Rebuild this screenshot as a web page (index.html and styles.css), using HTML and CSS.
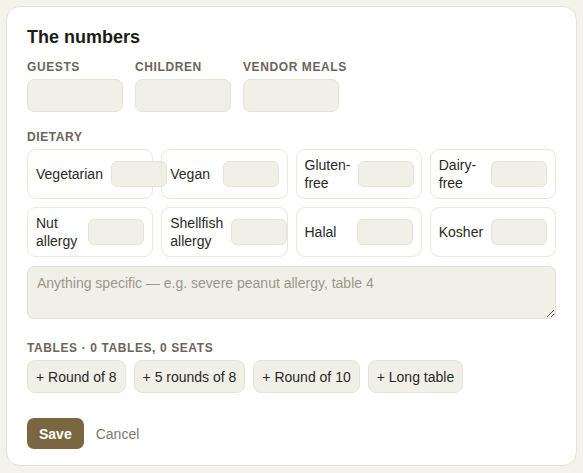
FILE: index.html
```html
<!DOCTYPE html>
<html lang="en">
<head>
    <meta charset="UTF-8">
    <meta name="viewport" content="width=device-width, initial-scale=1.0">
    <title>The numbers</title>
    <link rel="stylesheet" href="styles.css">
</head>
<body>
    <div class="card">
        <h2 class="card-title">The numbers</h2>

        <!-- head counts -->
        <div class="counts">
            <div class="field">
                <label class="field-label" for="guests">Guests</label>
                <input class="num-input" id="guests" type="number">
            </div>
            <div class="field">
                <label class="field-label" for="children">Children</label>
                <input class="num-input" id="children" type="number">
            </div>
            <div class="field">
                <label class="field-label" for="vendor">Vendor meals</label>
                <input class="num-input" id="vendor" type="number">
            </div>
        </div>

        <!-- dietary -->
        <div class="field-label dietary-label">Dietary</div>
        <div class="diet-grid">
            <label class="diet-item"><span class="diet-name">Vegetarian</span><input class="diet-input" type="number"></label>
            <label class="diet-item"><span class="diet-name">Vegan</span><input class="diet-input" type="number"></label>
            <label class="diet-item"><span class="diet-name">Gluten-free</span><input class="diet-input" type="number"></label>
            <label class="diet-item"><span class="diet-name">Dairy-free</span><input class="diet-input" type="number"></label>
            <label class="diet-item"><span class="diet-name">Nut allergy</span><input class="diet-input" type="number"></label>
            <label class="diet-item"><span class="diet-name">Shellfish allergy</span><input class="diet-input" type="number"></label>
            <label class="diet-item"><span class="diet-name">Halal</span><input class="diet-input" type="number"></label>
            <label class="diet-item"><span class="diet-name">Kosher</span><input class="diet-input" type="number"></label>
        </div>
        <textarea class="notes" placeholder="Anything specific — e.g. severe peanut allergy, table 4"></textarea>

        <!-- tables -->
        <div class="field-label tables-label">Tables · 0 tables, 0 seats</div>
        <div class="table-buttons">
            <button class="table-btn">+ Round of 8</button>
            <button class="table-btn">+ 5 rounds of 8</button>
            <button class="table-btn">+ Round of 10</button>
            <button class="table-btn">+ Long table</button>
        </div>

        <div class="actions">
            <button class="save-btn">Save</button>
            <button class="cancel-btn">Cancel</button>
        </div>
    </div>
</body>
</html>
```

FILE: styles.css
```css
body {
    font-family: "Liberation Sans", Arial, sans-serif;
    background: #f3f2eb;
    margin: 0;
    padding: 6px;
    color: #2a2926;
}
.card {
    background: #ffffff;
    border: 1px solid #e4e2d8;
    border-radius: 14px;
    padding: 20px 20px 16px;
}
.card-title {
    margin: 0 0 12px;
    font-size: 18px;
    font-weight: bold;
    color: #1c1c1a;
}
.field-label {
    display: block;
    font-size: 12px;
    font-weight: bold;
    text-transform: uppercase;
    letter-spacing: 0.05em;
    color: #6c655a;
    margin-bottom: 5px;
}
.counts {
    display: flex;
    gap: 12px;
}
.field {
    display: flex;
    flex-direction: column;
}
.num-input {
    width: 96px;
    height: 33px;
    box-sizing: border-box;
    background: #f1f0e8;
    border: 1px solid #e6e4da;
    border-radius: 7px;
    font: inherit;
    font-size: 14px;
    padding: 0 8px;
}
.dietary-label {
    margin-top: 18px;
}
.diet-grid {
    display: grid;
    grid-template-columns: repeat(4, minmax(0, 1fr));
    gap: 8px;
}
.diet-item {
    display: flex;
    align-items: center;
    justify-content: space-between;
    gap: 8px;
    padding: 6px 8px;
    border: 1px solid #eae8df;
    border-radius: 9px;
    font-size: 14px;
    line-height: 18px;
    color: #2a2926;
}
.diet-input {
    flex-shrink: 0;
    width: 56px;
    height: 26px;
    box-sizing: border-box;
    background: #f1f0e8;
    border: 1px solid #e6e4da;
    border-radius: 6px;
    font: inherit;
    padding: 0 6px;
}
.notes {
    display: block;
    width: 100%;
    height: 53px;
    box-sizing: border-box;
    margin-top: 9px;
    padding: 8px 9px;
    background: #f1f0e8;
    border: 1px solid #e3e1d7;
    border-radius: 7px;
    font-family: "Liberation Sans", Arial, sans-serif;
    font-size: 14px;
    color: #2a2926;
}
.notes::placeholder {
    color: #9a968c;
}
.tables-label {
    margin-top: 22px;
}
.table-buttons {
    display: flex;
    gap: 8px;
}
.table-btn {
    height: 33px;
    padding: 0 8px;
    background: #f1f0e8;
    border: 1px solid #e6e4da;
    border-radius: 8px;
    font-family: "Liberation Sans", Arial, sans-serif;
    font-size: 14px;
    color: #2a2926;
    cursor: pointer;
}
.actions {
    display: flex;
    align-items: center;
    margin-top: 25px;
}
.save-btn {
    height: 31px;
    padding: 0 12px;
    background: #7a6741;
    color: white;
    border: none;
    border-radius: 7px;
    font-family: "Liberation Sans", Arial, sans-serif;
    font-size: 14px;
    font-weight: bold;
    cursor: pointer;
}
.cancel-btn {
    height: 31px;
    padding: 0 12px;
    background: none;
    border: none;
    font-family: "Liberation Sans", Arial, sans-serif;
    font-size: 14px;
    color: #7d786e;
    cursor: pointer;
}
```
